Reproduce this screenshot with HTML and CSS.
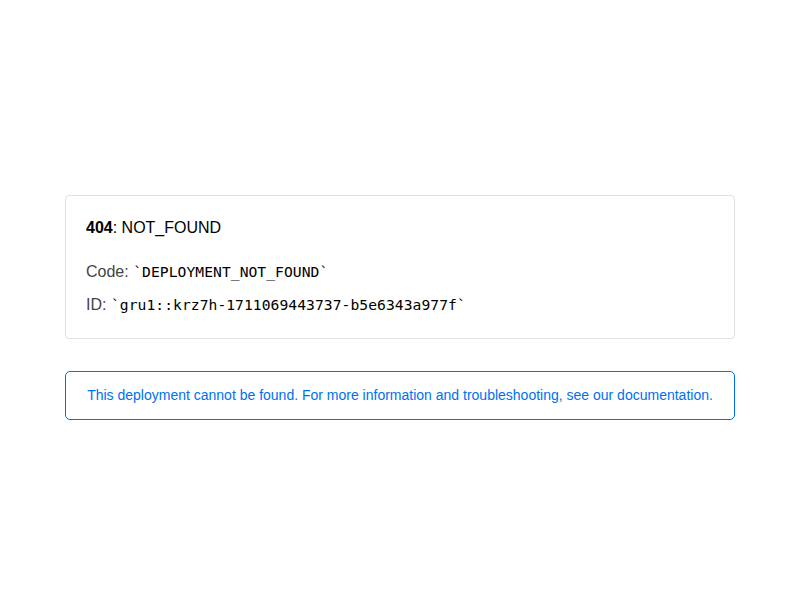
FILE: index.html
```html
<!DOCTYPE html>
<html lang="en">
<head>
<meta charset="utf-8">
<title>404: NOT_FOUND</title>
<link rel="stylesheet" href="styles.css">
</head>
<body>
<main class="page">
  <div class="container">
    <div class="devinfo">
      <span class="error-code"><strong>404</strong>: NOT_FOUND</span>
      <span class="devinfo-line">Code: <code>`DEPLOYMENT_NOT_FOUND`</code></span>
      <span class="devinfo-line">ID: <code>`gru1::krz7h-1711069443737-b5e6343a977f`</code></span>
    </div>
    <a class="note-link" href="#">
      <div class="note">This deployment cannot be found. For more information and troubleshooting, see our documentation.</div>
    </a>
  </div>
</main>
</body>
</html>
```

FILE: styles.css
```css
html, body {
  margin: 0;
  padding: 0;
  background: #fff;
  color: #000;
  font-family: "Liberation Sans", Arial, sans-serif;
}

.page {
  box-sizing: border-box;
  min-height: 100vh;
  padding-top: 14px;
  display: flex;
  flex-direction: column;
  justify-content: center;
  align-items: center;
}

.container {
  width: 670px;
}

.devinfo {
  box-sizing: border-box;
  display: flex;
  flex-direction: column;
  border: 1px solid #e0e0e0;
  border-radius: 4px;
  padding: 20px 20px 21px;
  margin-bottom: 32px;
  font-size: 16px;
  line-height: 24px;
}

.error-code {
  margin-bottom: 20px;
}

.devinfo-line {
  color: #444;
}

.devinfo-line + .devinfo-line {
  margin-top: 9px;
}

.devinfo-line code {
  color: #000;
  font-family: "DejaVu Sans Mono", monospace;
  font-size: 14.67px;
  letter-spacing: 0.05px;
}

.note-link {
  text-decoration: none;
}

.note {
  box-sizing: border-box;
  border: 1px solid #0070f3;
  border-radius: 5px;
  padding: 15px 16px 16px;
  color: #0070f3;
  font-size: 14px;
  line-height: 16px;
  text-align: center;
}
```
